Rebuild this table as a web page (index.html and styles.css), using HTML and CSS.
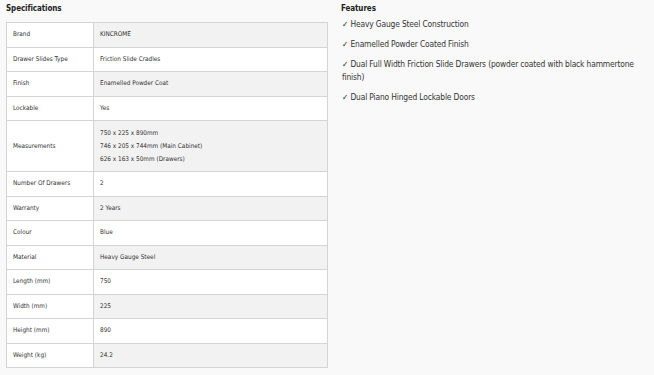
FILE: index.html
```html
<!DOCTYPE html>
<html>
<head>
<meta charset="utf-8">
<link rel="stylesheet" href="styles.css">
</head>
<body>
<div class="page">
  <section class="specs">
    <h2 class="title">Specifications</h2>
    <table class="spec-table">
      <tr class="shade"><td class="k">Brand</td><td class="v">KINCROME</td></tr>
      <tr><td class="k">Drawer Slides Type</td><td class="v">Friction Slide Cradles</td></tr>
      <tr class="shade"><td class="k">Finish</td><td class="v">Enamelled Powder Coat</td></tr>
      <tr><td class="k">Lockable</td><td class="v">Yes</td></tr>
      <tr class="shade tall"><td class="k">Measurements</td><td class="v"><div class="ml">750 x 225 x 890mm</div><div class="ml">746 x 205 x 744mm (Main Cabinet)</div><div class="ml">626 x 163 x 50mm (Drawers)</div></td></tr>
      <tr><td class="k">Number Of Drawers</td><td class="v">2</td></tr>
      <tr class="shade"><td class="k">Warranty</td><td class="v">2 Years</td></tr>
      <tr><td class="k">Colour</td><td class="v">Blue</td></tr>
      <tr class="shade"><td class="k">Material</td><td class="v">Heavy Gauge Steel</td></tr>
      <tr><td class="k">Length (mm)</td><td class="v">750</td></tr>
      <tr class="shade"><td class="k">Width (mm)</td><td class="v">225</td></tr>
      <tr><td class="k">Height (mm)</td><td class="v">890</td></tr>
      <tr class="shade"><td class="k">Weight (kg)</td><td class="v">24.2</td></tr>
    </table>
  </section>
  <section class="features">
    <h2 class="title">Features</h2>
    <ul class="feat-list">
      <li>✓ Heavy Gauge Steel Construction</li>
      <li>✓ Enamelled Powder Coated Finish</li>
      <li>✓ Dual Full Width Friction Slide Drawers (powder coated with black hammertone finish)</li>
      <li>✓ Dual Piano Hinged Lockable Doors</li>
    </ul>
  </section>
</div>
</body>
</html>
```
FILE: styles.css
```css
html, body {
  margin: 0;
  padding: 0;
  background: #f9f9f9;
}
body {
  font-family: "DejaVu Sans Condensed", "DejaVu Sans", sans-serif;
  color: #333;
}
.page {
  display: flex;
  padding: 3px 0 0 6px;
  gap: 13px;
}
.specs {
  width: 322px;
  flex: none;
}
.title {
  margin: 0;
  font-size: 8px;
  font-weight: bold;
  color: #222;
  line-height: 12px;
  letter-spacing: -0.1px;
}
.spec-table {
  margin-top: 7px;
  width: 322px;
  border-collapse: collapse;
  font-size: 6.4px;
  color: #333;
}
.spec-table td {
  border: 1px solid #d4d4d4;
  height: 23.5px;
  padding: 0 6px;
  vertical-align: middle;
  line-height: 9px;
}
.spec-table td.k {
  width: 74px;
  background: #fff;
}
.spec-table td.v {
  background: #fff;
}
.spec-table tr.shade td.v {
  background: #f2f2f2;
}
.spec-table tr.tall td {
  height: 50px;
}
.ml {
  line-height: 13px;
}
.features {
  flex: 1;
  padding-right: 4px;
}
.feat-list {
  list-style: none;
  margin: 3px 0 0 0;
  padding: 0;
  font-size: 8.4px;
  line-height: 13px;
  color: #333;
  letter-spacing: -0.15px;
}
.feat-list li {
  margin-bottom: 7px;
  padding-left: 1px;
}
```
